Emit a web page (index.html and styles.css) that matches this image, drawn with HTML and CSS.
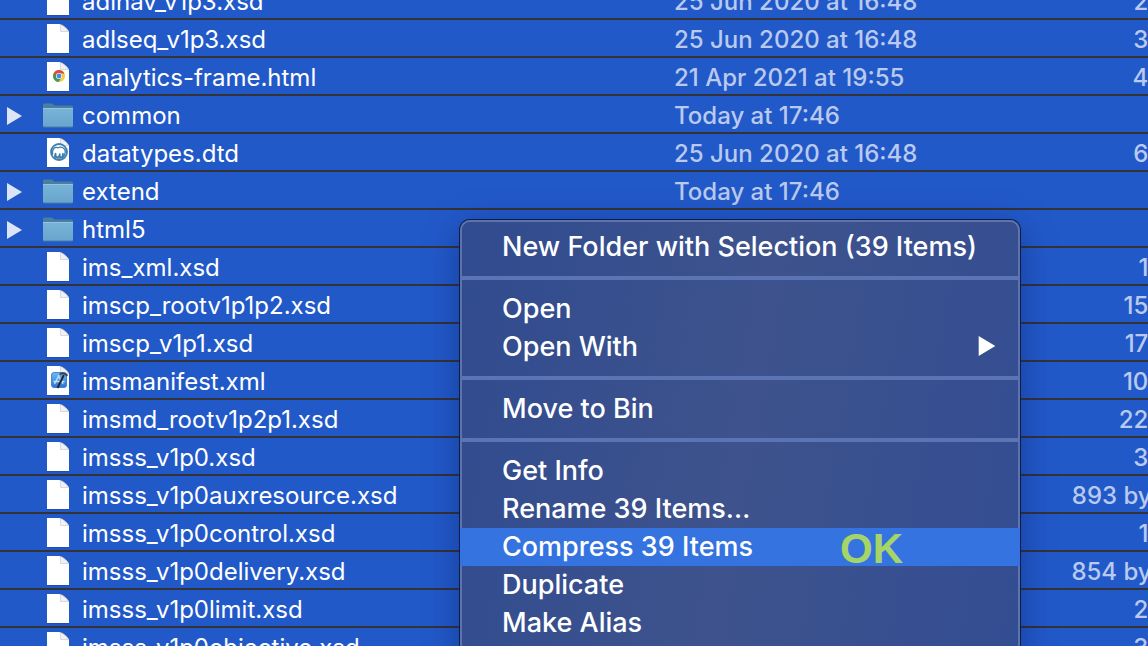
FILE: index.html
```
<!DOCTYPE html>
<html lang="en">
<head>
  <title>Finder</title>
  <meta charset="utf-8">
  <meta name="viewport" content="width=device-width, initial-scale=1">
  <link rel="stylesheet" href="styles.css">
</head>
<body>
  <svg class="sprite" aria-hidden="true">
    <defs>
      <linearGradient id="folder-front" x1="0" y1="0" x2="0" y2="1">
        <stop offset="0" stop-color="#78B3D8"/>
        <stop offset="1" stop-color="#69A5CD"/>
      </linearGradient>
      <linearGradient id="xcode-blue" x1="0" y1="0" x2="0" y2="1">
        <stop offset="0" stop-color="#6CB9F3"/>
        <stop offset="1" stop-color="#2A73DA"/>
      </linearGradient>
    </defs>
    <symbol id="file" viewBox="0 0 30 30">
      <path d="M4 .8h12.500l9.500 7.700v21.300H4z" fill="#1B449E" opacity=".6"/>
      <path d="M4 0h12c2 0 10 6 10 8v21H4z" fill="#FFFFFF"/>
      <path d="M17.500 .5V7.500H25.500C24 4.500 20.500 1.500 17.500 .5z" fill="#F1F1F1" stroke="#C9CCD2" stroke-width=".7"/>
    </symbol>
    <symbol id="folder" viewBox="0 0 30 30">
      <path d="M0 5c0-1 .6-1.500 1.500-1.500h7c1.500 0 1.800 2 3.500 2h16.500c1 0 1.500.6 1.500 1.500v5H0z" fill="#4B7F9F"/>
      <path d="M0 8.500h30v17.500c0 1-.5 1.500-1.500 1.500h-27c-1 0-1.500-.5-1.500-1.500z" fill="#4780A9"/>
      <path d="M0 8.500h30v16.500c0 1-.5 1.500-1.500 1.500h-27c-1 0-1.500-.5-1.500-1.500z" fill="url(#folder-front)"/>
      <path d="M0 8.500h30" stroke="#91C5E2"/>
    </symbol>
    <symbol id="chrome" viewBox="0 0 30 30">
      <use href="#file"/>
      <circle cx="16" cy="14" r="6" fill="#F6CB45"/>
      <path d="M16 14L10.800 11A6 6 0 0 0 15.500 20L18.600 15.500z" fill="#3C9B57"/>
      <path d="M10.800 11A6 6 0 0 1 21.400 11.400H16L13.400 15.500z" fill="#D6503F"/>
      <circle cx="16" cy="14" r="3" fill="#FFFFFF"/>
      <circle cx="16" cy="14" r="2.400" fill="#4C86E8"/>
    </symbol>
    <symbol id="mamp" viewBox="0 0 30 30">
      <use href="#file"/>
      <circle cx="16" cy="14" r="8" fill="#FFFFFF" stroke="#3E7FAE" stroke-width="1.800"/>
      <path d="M9.500 17C8.500 11 12 8.500 15 9.800C18 8 22.500 10 22.300 14L21.500 17.500L20.500 18L20 15L19.200 18.800H17V15.500L15.500 19H13.200L12.600 15L11.500 18.500C12.500 20.500 19 21 21 18.500" fill="none" stroke="#3E7FAE" stroke-width="1.300"/>
    </symbol>
    <symbol id="xcode" viewBox="0 0 30 30">
      <use href="#file"/>
      <rect x="8.500" y="6.500" width="15" height="15" rx="2.500" fill="url(#xcode-blue)" stroke="#2F74C4" stroke-width=".8"/>
      <path d="M15.800 9.500L11.500 18M15.200 9.500L20 18M10.500 15.500H21.500" fill="none" stroke="#BFE0FA" stroke-width="1.400"/>
      <path d="M20.800 9L14.500 22" stroke="#252A33" stroke-width="2"/>
      <path d="M16.800 8.500C19 6.500 21.500 6.800 24.500 9.800" fill="none" stroke="#39434F" stroke-width="2"/>
    </symbol>
    <symbol id="triangle" viewBox="0 0 15 18">
      <path d="M0 0L15 9L0 18z" fill="currentColor"/>
    </symbol>
  </svg>

  <main class="window">
    <table class="files">
      <colgroup>
        <col>
        <col class="col-date">
        <col class="col-size">
      </colgroup>
      <tbody>
        <tr>
          <td><div class="name"><svg class="icon"><use href="#file"/></svg>adlnav_v1p3.xsd</div></td>
          <td class="date">25 Jun 2020 at 16:48</td>
          <td class="size">2 KB</td>
        </tr>
        <tr>
          <td><div class="name"><svg class="icon"><use href="#file"/></svg>adlseq_v1p3.xsd</div></td>
          <td class="date">25 Jun 2020 at 16:48</td>
          <td class="size">3 KB</td>
        </tr>
        <tr>
          <td><div class="name"><svg class="icon"><use href="#chrome"/></svg>analytics-frame.html</div></td>
          <td class="date">21 Apr 2021 at 19:55</td>
          <td class="size">4 KB</td>
        </tr>
        <tr>
          <td><div class="name"><button class="toggle" type="button" aria-label="Expand common"><svg class="arrow"><use href="#triangle"/></svg></button><svg class="icon"><use href="#folder"/></svg>common</div></td>
          <td class="date">Today at 17:46</td>
          <td class="size"></td>
        </tr>
        <tr>
          <td><div class="name"><svg class="icon"><use href="#mamp"/></svg>datatypes.dtd</div></td>
          <td class="date">25 Jun 2020 at 16:48</td>
          <td class="size">6 KB</td>
        </tr>
        <tr>
          <td><div class="name"><button class="toggle" type="button" aria-label="Expand extend"><svg class="arrow"><use href="#triangle"/></svg></button><svg class="icon"><use href="#folder"/></svg>extend</div></td>
          <td class="date">Today at 17:46</td>
          <td class="size"></td>
        </tr>
        <tr>
          <td><div class="name"><button class="toggle" type="button" aria-label="Expand html5"><svg class="arrow"><use href="#triangle"/></svg></button><svg class="icon"><use href="#folder"/></svg>html5</div></td>
          <td class="date"></td>
          <td class="size"></td>
        </tr>
        <tr>
          <td><div class="name"><svg class="icon"><use href="#file"/></svg>ims_xml.xsd</div></td>
          <td class="date"></td>
          <td class="size">1 KB</td>
        </tr>
        <tr>
          <td><div class="name"><svg class="icon"><use href="#file"/></svg>imscp_rootv1p1p2.xsd</div></td>
          <td class="date"></td>
          <td class="size">15 KB</td>
        </tr>
        <tr>
          <td><div class="name"><svg class="icon"><use href="#file"/></svg>imscp_v1p1.xsd</div></td>
          <td class="date"></td>
          <td class="size">17 KB</td>
        </tr>
        <tr>
          <td><div class="name"><svg class="icon"><use href="#xcode"/></svg>imsmanifest.xml</div></td>
          <td class="date"></td>
          <td class="size">10 KB</td>
        </tr>
        <tr>
          <td><div class="name"><svg class="icon"><use href="#file"/></svg>imsmd_rootv1p2p1.xsd</div></td>
          <td class="date"></td>
          <td class="size">22 KB</td>
        </tr>
        <tr>
          <td><div class="name"><svg class="icon"><use href="#file"/></svg>imsss_v1p0.xsd</div></td>
          <td class="date"></td>
          <td class="size">3 KB</td>
        </tr>
        <tr>
          <td><div class="name"><svg class="icon"><use href="#file"/></svg>imsss_v1p0auxresource.xsd</div></td>
          <td class="date"></td>
          <td class="size">893 bytes</td>
        </tr>
        <tr>
          <td><div class="name"><svg class="icon"><use href="#file"/></svg>imsss_v1p0control.xsd</div></td>
          <td class="date"></td>
          <td class="size">1 KB</td>
        </tr>
        <tr>
          <td><div class="name"><svg class="icon"><use href="#file"/></svg>imsss_v1p0delivery.xsd</div></td>
          <td class="date"></td>
          <td class="size">854 bytes</td>
        </tr>
        <tr>
          <td><div class="name"><svg class="icon"><use href="#file"/></svg>imsss_v1p0limit.xsd</div></td>
          <td class="date"></td>
          <td class="size">2 KB</td>
        </tr>
        <tr>
          <td><div class="name"><svg class="icon"><use href="#file"/></svg>imsss_v1p0objective.xsd</div></td>
          <td class="date"></td>
          <td class="size">3 KB</td>
        </tr>
      </tbody>
    </table>

    <div class="menu">
      <button class="menu-item" type="button">New Folder with Selection (39 Items)</button>
      <hr class="separator">
      <button class="menu-item" type="button">Open</button>
      <button class="menu-item" type="button">Open With<svg class="arrow submenu-arrow"><use href="#triangle"/></svg></button>
      <hr class="separator">
      <button class="menu-item" type="button">Move to Bin</button>
      <hr class="separator">
      <button class="menu-item" type="button">Get Info</button>
      <button class="menu-item" type="button">Rename 39 Items…</button>
      <button class="menu-item menu-item-active" type="button">Compress 39 Items<span class="note">OK</span></button>
      <button class="menu-item" type="button">Duplicate</button>
      <button class="menu-item" type="button">Make Alias</button>
    </div>
  </main>
</body>
</html>
```
FILE: styles.css
```
*, *::before, *::after {
  margin: 0;
  padding: 0;
  box-sizing: border-box;
}

body {
  background-color: #2259C9;
  color: #FFFFFF;
  font-size: 24px;
  font-weight: 500;
  font-family: "Inter", sans-serif;
}

button {
  border: none;
  background: none;
  color: inherit;
  font: inherit;
  cursor: pointer;
}

.sprite {
  position: absolute;
  width: 0;
  height: 0;
}

.window {
  position: relative;
  height: 100vh;
  overflow: hidden;
}

/* the list is scrolled by half a row and runs past the right edge */
.files {
  width: calc(100% + 39px);
  margin-top: -18px;
  table-layout: fixed;
  border-collapse: collapse;
}

.col-date {
  width: 298px;
}

.col-size {
  width: 215px;
}

.files tr {
  height: 38px;
  box-shadow: inset 0 -2px #333237;
}

.files td {
  white-space: nowrap;
}

.name {
  display: flex;
  align-items: center;
  height: 38px;
  padding: 1px 0 0 43px;
  font-weight: 400;
}

.toggle {
  display: flex;
  width: 36px;
  margin-left: -36px;
  color: #DCE5F8;
}

.arrow {
  width: 15px;
  height: 18px;
}

.icon {
  flex: none;
  width: 30px;
  height: 30px;
  margin: 0 9px 1px 0;
}

.files .date, .files .size {
  padding-top: 2px;
  color: #BACAEE;
  line-height: 36px;
}

.size {
  text-align: right;
}

.menu {
  position: absolute;
  top: 220px;
  bottom: -20px;
  left: 460px;
  width: 560px;
  padding-top: 8px;
  border-radius: 10px;
  background: linear-gradient(100deg, #304B8F 0%, #3E538D 50%, #334D92 100%);
  box-shadow:
    inset 0 0 0 2px #5E73AA,
    0 0 0 1px #0B1D48,
    0 8px 36px rgb(0 20 80 / 40%);
  font-size: 27px;
}

.menu-item {
  position: relative;
  display: flex;
  align-items: center;
  justify-content: space-between;
  width: 100%;
  height: 38px;
  padding: 0 24px 2px 42px;
  white-space: nowrap;
}

.menu-item-active {
  background-color: #3573E0;
}

.submenu-arrow {
  width: 18px;
  height: 20px;
}

.separator {
  height: 4px;
  margin: 10px 0;
  border: none;
  background-color: #5B75B4;
}

.note {
  position: absolute;
  top: 0;
  left: 380px;
  color: #A5D468;
  font-size: 42px;
  font-weight: 700;
  font-family: "Liberation Sans", sans-serif;
  line-height: 42px;
}
```
